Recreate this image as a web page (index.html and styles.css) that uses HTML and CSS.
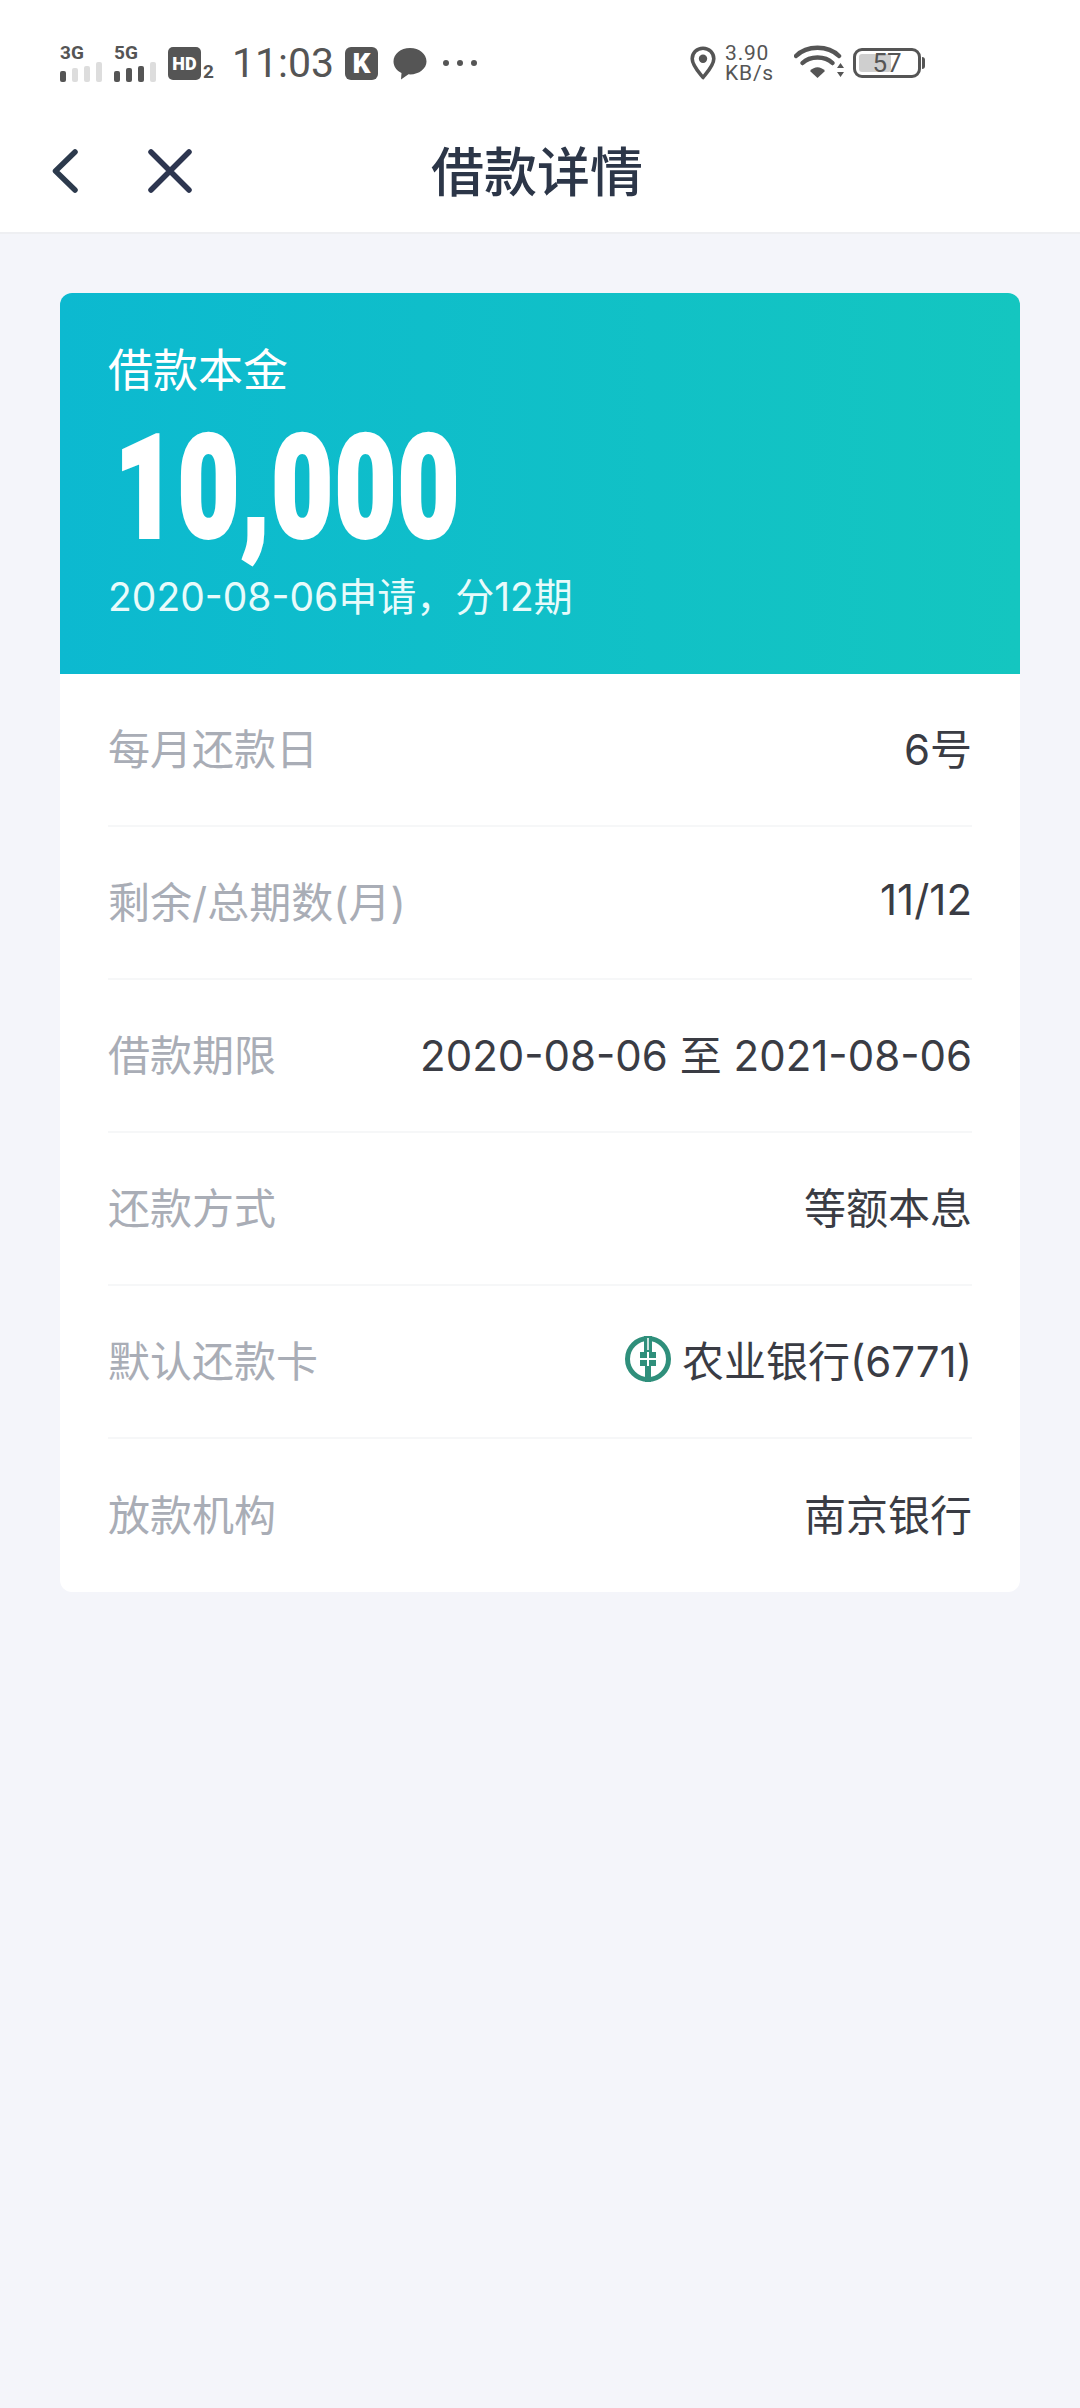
FILE: index.html
```html
<!DOCTYPE html>
<html lang="zh-CN">
<head>
  <meta charset="UTF-8">
  <title>借款详情</title>
  <meta name="viewport" content="width=device-width, initial-scale=1.0">
  <link rel="stylesheet" href="styles.css">
</head>
<body>

  <header class="top">
    <div class="status">
      <div class="status-left">
        <div class="signal">
          <span class="signal-name">3G</span>
          <svg width="42" height="20" viewBox="0 0 42 20">
            <rect x="0" y="9" width="6" height="11" rx="2" fill="#555"/>
            <rect x="12" y="6" width="6" height="14" rx="2" fill="#ddd"/>
            <rect x="24" y="4" width="6" height="16" rx="2" fill="#ddd"/>
            <rect x="36" y="0" width="6" height="20" rx="2" fill="#ddd"/>
          </svg>
        </div>
        <div class="signal signal-second">
          <span class="signal-name">5G</span>
          <svg width="42" height="20" viewBox="0 0 42 20">
            <rect x="0" y="9" width="6" height="11" rx="2" fill="#555"/>
            <rect x="12" y="6" width="6" height="14" rx="2" fill="#555"/>
            <rect x="24" y="4" width="6" height="16" rx="2" fill="#555"/>
            <rect x="36" y="0" width="6" height="20" rx="2" fill="#ddd"/>
          </svg>
        </div>
        <div class="hd"><span class="hd-box">HD</span><span class="hd-sub">2</span></div>
        <span class="time">11:03</span>
        <span class="k-box">K</span>
        <svg class="bubble" width="34" height="33" viewBox="0 0 34 33">
          <path d="M17 1C7.6 1 .5 7.2.5 14.5c0 5 3.200 9.200 8 11.500l-.5 6.500 7.500-5.200c.5 0 1 .1 1.500.1 9.400 0 16.500-6 16.500-12.900C33.500 7.200 26.400 1 17 1z" fill="#555"/>
        </svg>
        <div class="dots"><i></i><i></i><i></i></div>
      </div>
      <div class="status-right">
        <svg class="pin" width="26" height="34" viewBox="0 0 26 34">
          <path d="M13 2.200C6.800 2.200 2.200 7 2.200 12.800 2.200 19.500 9 26.500 13 31.500c4-5 10.800-12 10.800-18.700C23.800 7 19.200 2.200 13 2.200z" fill="none" stroke="#555" stroke-width="3.600" stroke-linejoin="round"/>
          <circle cx="13" cy="12.800" r="4.200" fill="#555"/>
        </svg>
        <div class="speed"><span>3.90</span><span>KB/s</span></div>
        <svg class="wifi" width="50" height="36" viewBox="0 0 50 36">
          <path d="M2 11C13 0 34 0 45 11" fill="none" stroke="#555" stroke-width="4.500" stroke-linecap="round"/>
          <path d="M8.500 18C16 10.500 31 10.500 38.500 18" fill="none" stroke="#555" stroke-width="4.500" stroke-linecap="round"/>
          <path d="M16 26c4.500-5 10.500-5 15 0l-7.500 7z" fill="#555"/>
          <path d="M43 23l3.500-5 3.500 5zM43 27h7l-3.500 5z" fill="#555"/>
        </svg>
        <div class="battery">
          <div class="battery-shell">
            <div class="battery-level"></div>
            <span class="battery-num">57</span>
          </div>
          <div class="battery-cap"></div>
        </div>
      </div>
    </div>

    <nav class="nav">
      <div class="nav-icons">
        <svg width="26" height="44" viewBox="0 0 26 44">
          <path d="M23 3L3.500 22 23 41" fill="none" stroke="#2c3a4c" stroke-width="5.500" stroke-linecap="round" stroke-linejoin="round"/>
        </svg>
        <svg width="44" height="44" viewBox="0 0 44 44">
          <path d="M3 3l38 38M41 3L3 41" fill="none" stroke="#2d3650" stroke-width="5.500" stroke-linecap="round"/>
        </svg>
      </div>
      <h1 class="nav-title">借款详情</h1>
      <div></div>
    </nav>
  </header>

  <main class="card">
    <section class="hero">
      <div class="hero-label">借款本金</div>
      <div class="hero-amount">10,000</div>
      <div class="hero-sub">2020-08-06申请，分12期</div>
    </section>

    <section class="rows">
      <div class="row">
        <span class="row-label">每月还款日</span>
        <span class="row-value">6号</span>
      </div>
      <div class="row">
        <span class="row-label">剩余/总期数(月)</span>
        <span class="row-value">11/12</span>
      </div>
      <div class="row">
        <span class="row-label">借款期限</span>
        <span class="row-value">2020-08-06 至 2021-08-06</span>
      </div>
      <div class="row">
        <span class="row-label">还款方式</span>
        <span class="row-value">等额本息</span>
      </div>
      <div class="row">
        <span class="row-label">默认还款卡</span>
        <span class="row-value row-bank">
          <svg width="48" height="48" viewBox="0 0 48 48">
            <circle cx="24" cy="24" r="20.500" fill="none" stroke="#2f8f7b" stroke-width="5"/>
            <path d="M20 1h8v16h4v14h-5v16h-6V31h-5V17h4z" fill="#2f8f7b"/>
            <path d="M16 24h16M24 17v14" stroke="#fff" stroke-width="2"/>
            <path d="M24 3v12" stroke="#fff" stroke-width="1.500"/>
          </svg>
          农业银行(6771)
        </span>
      </div>
      <div class="row">
        <span class="row-label">放款机构</span>
        <span class="row-value">南京银行</span>
      </div>
    </section>
  </main>

</body>
</html>
```

FILE: styles.css
```css
* {
  box-sizing: border-box;
}

body {
  margin: 0;
  min-height: 2408px;
  background-color: #f4f5fa;
  font-family: Inter, "Noto Sans CJK SC", sans-serif;
}

.top {
  height: 234px;
  background-color: #fff;
  border-bottom: 2px solid #eeeff2;
}

/* status bar */
.status {
  height: 110px;
  padding: 16px 155px 0 60px;
  display: flex;
  justify-content: space-between;
  align-items: center;
  color: #555;
  font-family: Roboto, sans-serif;
}

.status-left,
.status-right {
  display: flex;
  align-items: center;
}

.signal {
  display: flex;
  flex-direction: column;
  gap: 1px;
}

.signal-second {
  margin-left: 12px;
}

.signal-name {
  font-size: 19px;
  line-height: 17px;
  font-weight: 700;
}

.hd {
  margin-left: 12px;
  display: flex;
  align-items: flex-end;
}

.hd-box {
  width: 33px;
  height: 33px;
  border-radius: 5px;
  background-color: #555;
  color: #fff;
  font-size: 18px;
  font-weight: 900;
  line-height: 33px;
  text-align: center;
}

.hd-sub {
  font-size: 19px;
  line-height: 17px;
  font-weight: 700;
  margin-left: 2px;
}

.time {
  margin-left: 18px;
  font-size: 41px;
  line-height: 44px;
}

.k-box {
  margin-left: 11px;
  width: 33px;
  height: 33px;
  border-radius: 6px;
  background-color: #555;
  color: #fff;
  font-size: 28px;
  font-weight: 900;
  line-height: 33px;
  text-align: center;
}

.bubble {
  margin-left: 15px;
}

.dots {
  margin-left: 16px;
  display: flex;
  gap: 8px;
}

.dots i {
  width: 6px;
  height: 6px;
  border-radius: 50%;
  background-color: #555;
}

.speed {
  margin-left: 9px;
  display: flex;
  flex-direction: column;
  font-size: 21px;
  line-height: 20px;
  letter-spacing: .8px;
}

.wifi {
  margin-left: 20px;
}

.battery {
  margin-left: 9px;
  display: flex;
  align-items: center;
}

.battery-shell {
  position: relative;
  width: 68px;
  height: 30px;
  border: 3px solid #555;
  border-radius: 9px;
  padding: 3px;
}

.battery-level {
  width: 57%;
  height: 100%;
  background-color: #cfcfcf;
  border-radius: 3px;
}

.battery-num {
  position: absolute;
  inset: 0;
  text-align: center;
  font-size: 26px;
  line-height: 24px;
}

.battery-cap {
  width: 3px;
  height: 12px;
  margin-left: 1px;
  background-color: #555;
  border-radius: 0 3px 3px 0;
}

/* nav */
.nav {
  height: 122px;
  padding: 0 58px 0 52px;
  display: grid;
  grid-template-columns: 1fr auto 1fr;
  align-items: center;
}

.nav-icons {
  display: flex;
  align-items: center;
  gap: 70px;
}

.nav-title {
  margin: 3px 0 0;
  font-size: 53px;
  line-height: 70px;
  font-weight: 500;
  color: #2c3648;
}

/* card */
.card {
  margin: 59px 60px 0;
  border-radius: 12px;
  overflow: hidden;
  background-color: #fff;
}

.hero {
  height: 381px;
  padding: 48px 48px 0;
  background: linear-gradient(90deg, #0cb9d0, #14c6c0);
  color: #fff;
}

.hero-label {
  font-size: 45px;
  line-height: 60px;
}

.hero-amount {
  margin: 13px 0 0 7px;
  font-family: Roboto, sans-serif;
  font-size: 142px;
  line-height: 150px;
  font-weight: 900;
  letter-spacing: 3px;
  -webkit-text-stroke: 4px #fff;
  transform: scaleX(.74);
  transform-origin: left center;
}

.hero-sub {
  margin-top: 3px;
  font-size: 39px;
  line-height: 60px;
  color: #e8fbfb;
}

.rows {
  padding: 0 48px;
}

.row {
  height: 153px;
  padding-bottom: 6px;
  display: flex;
  justify-content: space-between;
  align-items: center;
  border-bottom: 2px solid #f6f7f8;
  font-size: 42px;
}

.row:last-child {
  border-bottom: none;
}

.row-label {
  color: #a9adb6;
}

.row-value {
  color: #3a3c44;
}

.row-bank {
  display: flex;
  align-items: center;
  gap: 10px;
}
```
